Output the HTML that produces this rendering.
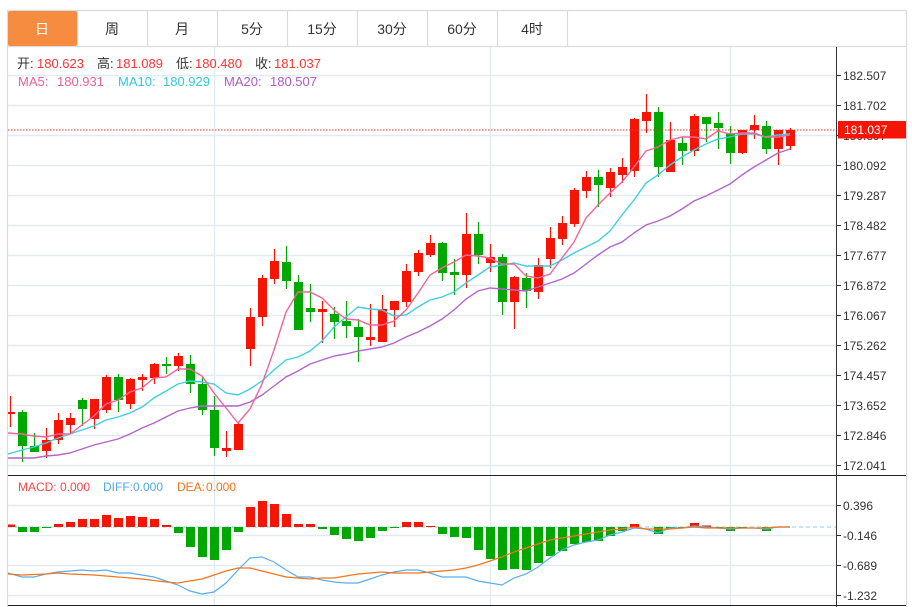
<!DOCTYPE html>
<html lang="zh"><head><meta charset="utf-8"><title>K线</title>
<style>html,body{margin:0;padding:0;background:#fff;width:912px;height:607px;overflow:hidden}svg{display:block}text{font-family:"Liberation Sans","Noto Sans CJK SC",sans-serif}</style></head><body>
<svg width="912" height="607" viewBox="0 0 912 607" xmlns="http://www.w3.org/2000/svg">
<rect width="912" height="607" fill="#fff"/>
<!-- grid -->
<path fill="none" stroke="#e2eaf2" stroke-width="1.4" d="M8 75.5H836M8 105.5H836M8 135.5H836M8 165.5H836M8 195.5H836M8 225.5H836M8 255.5H836M8 285.5H836M8 315.5H836M8 345.5H836M8 375.5H836M8 405.5H836M8 435.5H836M8 465.5H836M8 505.5H836M8 535.5H836M8 565.5H836M8 595.5H836M214.5 47V605M490.5 47V605M730.5 47V605"/>
<!-- frame and tabs -->
<path fill="none" stroke="#d9dbde" stroke-width="1.2" d="M7.5 10V607M906.5 10V607M7 10.5H907M7 46.5H907M77.5 10V46M147.5 10V46M217.5 10V46M287.5 10V46M357.5 10V46M427.5 10V46M497.5 10V46M567.5 10V46"/>
<rect x="8" y="11" width="69" height="35" rx="2" fill="#f58c40"/>
<g font-size="14" text-anchor="middle" fill="#333">
<text x="42" y="34" fill="#fff">日</text><text x="112" y="34">周</text><text x="182" y="34">月</text><text x="252" y="34">5分</text><text x="322" y="34">15分</text><text x="392" y="34">30分</text><text x="462" y="34">60分</text><text x="532" y="34">4时</text>
</g>
<!-- legend -->
<g font-size="13" fill="#f33">
<text x="17" y="68" fill="#333">开:</text><text x="37" y="68">180.623</text>
<text x="97" y="68" fill="#333">高:</text><text x="116" y="68">181.089</text>
<text x="176" y="68" fill="#333">低:</text><text x="195" y="68">180.480</text>
<text x="255" y="68" fill="#333">收:</text><text x="274" y="68">181.037</text>
<text x="18" y="86" fill="#f0609a">MA5:</text><text x="57" y="86" fill="#f0609a">180.931</text>
<text x="118" y="86" fill="#2fcbdc">MA10:</text><text x="163" y="86" fill="#2fcbdc">180.929</text>
<text x="224" y="86" fill="#ae5cc8">MA20:</text><text x="270" y="86" fill="#ae5cc8">180.507</text>
</g>
<!-- wicks -->
<path fill="none" stroke="#f61505" stroke-width="1.2" d="M10.5 396V427M46.5 428V458M58.5 413V444M70.5 413V433M94.5 399V429M106.5 375V413M130.5 378V409M142.5 374V391M154.5 363V384M178.5 353V371M226.5 431V457M238.5 423V450M250.5 308V366M262.5 275V326M274.5 249V284M322.5 301V343M370.5 304V346M382.5 295V342M394.5 301V327M406.5 264V307M418.5 250V276M430.5 235V257M466.5 213V288M490.5 244V272M514.5 276V329M538.5 258V299M550.5 227V268M562.5 216V245M574.5 188V227M586.5 171V198M610.5 168V197M622.5 158V183M634.5 118V177M646.5 94V133M670.5 122V172M694.5 114V156M742.5 130V154M754.5 115V139M778.5 130V165M790.5 128V150"/>
<path fill="none" stroke="#02a702" stroke-width="1.2" d="M22.5 410V462M34.5 433V452M82.5 398V426M118.5 374V412M166.5 357V374M190.5 355V393M202.5 377V415M214.5 396V456M286.5 246V289M298.5 275V330M310.5 284V322M334.5 307V339M346.5 301V338M358.5 319V362M442.5 242V281M454.5 259V295M478.5 222V264M502.5 254V315M526.5 273V308M598.5 170V207M658.5 107V177M682.5 137V165M706.5 117V142M718.5 112V149M730.5 126V164M766.5 121V154"/>
<!-- bodies -->
<path fill="#f61505" d="M8 412H15V414H8ZM42 440h9v11h-9zM54 420h9v20h-9zM66 418h9v7h-9zM90 399h9v20h-9zM102 377h9v33h-9zM126 379h9v25h-9zM138 377h9v3h-9zM150 364h9v14h-9zM174 356h9v10h-9zM222 448h9v3h-9zM234 424h9v26h-9zM246 317h9v32h-9zM258 278h9v39h-9zM270 261h9v18h-9zM318 309h9v3h-9zM366 337h9v3h-9zM378 309h9v33h-9zM390 301h9v9h-9zM402 271h9v31h-9zM414 253h9v19h-9zM426 243h9v12h-9zM462 234h9v41h-9zM486 257h9v6h-9zM510 277h9v25h-9zM534 265h9v27h-9zM546 238h9v21h-9zM558 223h9v16h-9zM570 190h9v34h-9zM582 177h9v14h-9zM606 172h9v16h-9zM618 167h9v8h-9zM630 119h9v52h-9zM642 112h9v9h-9zM666 140h9v32h-9zM690 116h9v35h-9zM738 130h9v23h-9zM750 125h9v5h-9zM774 130h9v19h-9zM786 130h9v16h-9z"/>
<path fill="#02a702" d="M18 412h9v34h-9zM30 446h9v6h-9zM78 400h9v9h-9zM114 377h9v23h-9zM162 364h9v2h-9zM186 364h9v20h-9zM198 384h9v26h-9zM210 410h9v38h-9zM282 262h9v19h-9zM294 282h9v48h-9zM306 308h9v4h-9zM330 314h9v8h-9zM342 321h9v5h-9zM354 327h9v10h-9zM438 243h9v30h-9zM450 272h9v3h-9zM474 234h9v21h-9zM498 257h9v45h-9zM522 278h9v13h-9zM594 177h9v8h-9zM654 112h9v55h-9zM678 143h9v8h-9zM702 117h9v7h-9zM714 123h9v5h-9zM726 134h9v19h-9zM762 126h9v23h-9z"/>
<!-- MA lines -->
<polyline fill="none" stroke="#b365cc" stroke-width="1.4" points="8,458 22,458 34,458 46,456 58,455 70,453 82,449 94,445 106,442 118,439 130,434 142,428 154,423 166,417 178,411 190,408 202,406 214,406 226,406 238,406 250,402 262,395 274,386 286,377 298,371 310,364 322,360 334,356 346,354 358,351 370,349 382,347 394,343 406,337 418,332 430,326 442,319 454,310 466,299 478,291 490,288 502,289 514,290 526,291 538,287 550,283 562,279 574,273 586,264 598,255 610,247 622,242 634,233 646,225 658,221 670,216 682,209 694,201 706,196 718,190 730,184 742,175 754,167 766,160 778,153 790,149"/>
<polyline fill="none" stroke="#40cfe0" stroke-width="1.4" points="8,454 22,450 34,447 46,443 58,438 70,434 82,430 94,426 106,420 118,417 130,413 142,407 154,398 166,391 178,384 190,381 202,382 214,384 226,393 238,395 250,389 262,381 274,370 286,360 298,357 310,351 322,341 334,327 346,317 358,307 370,309 382,310 394,316 406,315 418,307 430,300 442,297 454,292 466,283 478,275 490,267 502,265 514,263 526,266 538,266 550,266 562,260 574,253 586,247 598,241 610,231 622,215 634,200 646,183 658,175 670,165 682,157 694,150 706,144 718,139 730,137 742,134 754,134 766,137 778,135 790,134"/>
<polyline fill="none" stroke="#f0659a" stroke-width="1.4" points="8,433 22,434 34,436 46,437 58,434 70,434 82,425 94,416 106,404 118,400 130,392 142,388 154,378 166,377 178,369 190,369 202,376 214,393 226,408 238,423 250,409 262,384 274,350 286,312 298,292 310,292 322,298 334,310 346,319 358,320 370,325 382,325 394,321 406,310 418,293 430,275 442,268 454,262 466,255 478,256 490,258 502,264 514,264 526,276 538,278 550,274 562,258 574,242 586,218 598,205 610,193 622,182 634,167 646,151 658,147 670,140 682,137 694,137 706,139 718,131 730,134 742,133 754,133 766,137 778,137 790,135"/>
<!-- last price line -->
<line x1="8" y1="130" x2="836" y2="130" stroke="#f0302a" stroke-dasharray="1.5 1.5"/>
<!-- MACD -->
<line x1="8" y1="527" x2="836" y2="527" stroke="#aee0f2" stroke-width="1.4" stroke-dasharray="4 3"/>
<path fill="#f61505" d="M8 524.5H15V527H8ZM54 524h9v3h-9zM66 522h9v5h-9zM78 519h9v8h-9zM90 519h9v8h-9zM102 515h9v12h-9zM114 518h9v9h-9zM126 516h9v11h-9zM138 517h9v10h-9zM150 519h9v8h-9zM162 525h9v2h-9zM246 507h9v20h-9zM258 501h9v26h-9zM270 504h9v23h-9zM282 514h9v13h-9zM294 524h9v3h-9zM306 524h9v3h-9zM402 522h9v5h-9zM414 522h9v5h-9zM426 526h9v1h-9zM630 524h9v3h-9zM690 523h9v4h-9zM702 525.5h9v1.5h-9z"/>
<path fill="#02a702" d="M18 527h9v5h-9zM30 527h9v5h-9zM42 527h9v1h-9zM174 527h9v6h-9zM186 527h9v20h-9zM198 527h9v30h-9zM210 527h9v33h-9zM222 527h9v23h-9zM234 527h9v5h-9zM318 527h9v2h-9zM330 527h9v8h-9zM342 527h9v12h-9zM354 527h9v14h-9zM366 527h9v11h-9zM378 527h9v4h-9zM390 527h9v1h-9zM438 527h9v7h-9zM450 527h9v10h-9zM462 527h9v11h-9zM474 527h9v23h-9zM486 527h9v32h-9zM498 527h9v43h-9zM510 527h9v42h-9zM522 527h9v43h-9zM534 527h9v36h-9zM546 527h9v29h-9zM558 527h9v24h-9zM570 527h9v17h-9zM582 527h9v15h-9zM594 527h9v14h-9zM606 527h9v9h-9zM618 527h9v4h-9zM654 527h9v7h-9zM666 527h9v1.5h-9zM678 527h9v1h-9zM714 527h9v1h-9zM726 527h9v4h-9zM738 527h9v1h-9zM762 527h9v4h-9z"/>
<polyline fill="none" stroke="#5aaef0" stroke-width="1.2" points="8,573 22,577 34,577 46,574 58,572 70,571 82,570 94,571 106,570 118,573 130,573 142,575 154,577 166,581 178,585 190,591 202,594 214,592 226,583 238,570 250,558 262,557 274,562 286,570 298,577 310,577 322,580 334,582 346,583 358,583 370,579 382,575 394,572 406,570 418,570 430,573 442,577 454,577 466,577 478,581 490,583 502,585 514,578 526,574 538,567 550,558 562,550 574,545 586,542 598,540 610,535 622,532 634,528 646,529 658,533 670,528 682,528 694,526 706,527 718,528 730,529 742,528 754,528 766,529 778,527 790,527"/>
<polyline fill="none" stroke="#f5751e" stroke-width="1.2" points="8,574 22,575 46,574 58,573 70,574 94,575 118,577 142,579 166,582 178,583 190,581 202,579 214,575 226,571 238,568 250,568 262,571 274,574 286,577 298,578 310,579 322,578 334,578 346,576 358,574 370,573 382,572 394,573 406,573 418,573 430,572 442,571 454,570 466,568 478,565 490,561 502,557 514,552 526,548 538,544 550,540 562,538 574,536 586,534 598,532 610,530 622,529 634,527 646,529 658,529 670,529 682,528 694,527 706,528 718,528 730,528 742,528 754,528 766,528 778,527 790,527"/>
<g font-size="12">
<text x="18" y="491" fill="#f44">MACD:</text><text x="60" y="491" fill="#f44">0.000</text>
<text x="103" y="491" fill="#4fa8f0">DIFF:</text><text x="133" y="491" fill="#4fa8f0">0.000</text>
<text x="177" y="491" fill="#f5751e">DEA:</text><text x="206" y="491" fill="#f5751e">0.000</text>
</g>
<!-- axes -->
<path fill="none" stroke="#222" d="M8 475.5H906M8 605.5H906"/>
<path fill="none" stroke="#333" d="M836.5 47V607M836 75.5h5M836 105.5h5M836 135.5h5M836 165.5h5M836 195.5h5M836 225.5h5M836 255.5h5M836 285.5h5M836 315.5h5M836 345.5h5M836 375.5h5M836 405.5h5M836 435.5h5M836 465.5h5M836 505.5h5M836 535.5h5M836 565.5h5M836 595.5h5"/>
<g font-size="12" fill="#333">
<text x="843" y="80">182.507</text><text x="843" y="110">181.702</text><text x="843" y="140">180.897</text><text x="843" y="170">180.092</text><text x="843" y="200">179.287</text><text x="843" y="230">178.482</text><text x="843" y="260">177.677</text><text x="843" y="290">176.872</text><text x="843" y="320">176.067</text><text x="843" y="350">175.262</text><text x="843" y="380">174.457</text><text x="843" y="410">173.652</text><text x="843" y="440">172.846</text><text x="843" y="470">172.041</text>
<text x="843" y="510">0.396</text><text x="843" y="540">-0.146</text><text x="843" y="570">-0.689</text><text x="843" y="600">-1.232</text>
</g>
<rect x="838" y="121" width="68" height="17.5" fill="#f61505"/>
<text x="844" y="134" font-size="12" fill="#fff">181.037</text>
</svg>
</body></html>
